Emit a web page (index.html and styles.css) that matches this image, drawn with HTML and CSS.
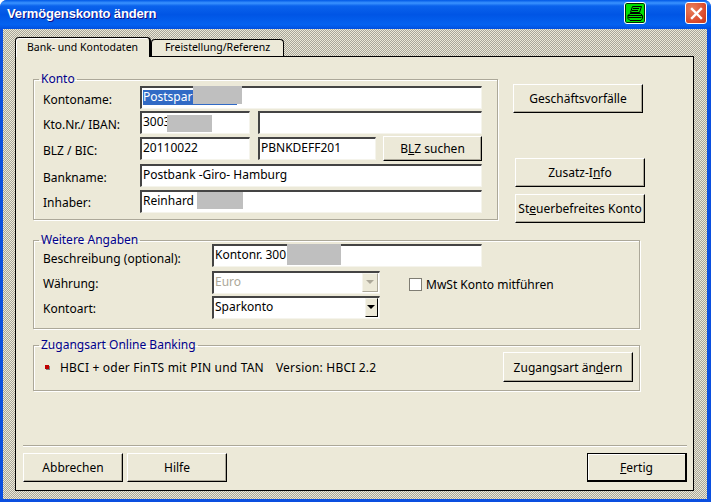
FILE: index.html
```html
<!DOCTYPE html>
<html lang="de">
<head>
    <meta charset="utf-8"/>
    <title>Vermögenskonto ändern</title>
    <link rel="stylesheet" href="styles.css">
</head>
<body>
<div class="window">
    <div class="titlebar">
        <span class="title">Vermögenskonto ändern</span>
        <span class="printer">
            <svg width="18" height="17" viewBox="0 0 18 17">
                <path d="M6.5 1.5h9l-2 6h-9z" fill="none" stroke="#000"/>
                <path d="M7 3.5h6M6 5.5h6" stroke="#000"/>
                <path d="M4 8.5h10.5l2 2v3l-1.5 2h-11l-2-2v-3z" fill="none" stroke="#000"/>
                <path d="M2 10.5h14M2.5 12.5h13" stroke="#000"/>
            </svg>
        </span>
        <span class="close">
            <svg width="13" height="13" viewBox="0 0 13 13">
                <path d="M2 2l9 9M11 2l-9 9" stroke="#fff" stroke-width="2.4" stroke-linecap="square"/>
            </svg>
        </span>
    </div>
    <div class="dither">
        <div class="tabs">
            <div class="tab active">Bank- und Kontodaten</div>
            <div class="tab">Freistellung/Referenz</div>
        </div>
        <div class="panel">
            <div class="top-row">
                <fieldset class="group konto">
                    <legend>Konto</legend>
                    <div class="konto-grid">
                        <label>Kontoname:</label>
                        <div class="field c-full"><span class="sel">Postspar</span><i class="redact r-name"></i></div>
                        <label>Kto.Nr./ IBAN:</label>
                        <div class="field c-kto">3003<i class="redact r-kto"></i></div>
                        <div class="field c-rest"></div>
                        <label>BLZ / BIC:</label>
                        <div class="field c-kto">20110022</div>
                        <div class="field c-bic">PBNKDEFF201</div>
                        <div class="btn btn-blz">B<u>L</u>Z suchen</div>
                        <label>Bankname:</label>
                        <div class="field c-full">Postbank -Giro- Hamburg</div>
                        <label class="last-label">Inhaber:</label>
                        <div class="field c-full">Reinhard<i class="redact r-inh"></i></div>
                    </div>
                </fieldset>
                <div class="side">
                    <div class="btn btn-side first">Geschäftsvorfälle</div>
                    <div class="btn btn-side second">Zusatz-I<u>n</u>fo</div>
                    <div class="btn btn-side third">St<u>e</u>uerbefreites Konto</div>
                </div>
            </div>
            <fieldset class="group weitere">
                <legend>Weitere Angaben</legend>
                <div class="weitere-grid">
                    <label>Beschreibung (optional):</label>
                    <div class="field wide">Kontonr. 300<i class="redact r-desc"></i></div>
                    <label>Währung:</label>
                    <div class="field combo disabled">Euro<span class="arrow wide-arrow"></span></div>
                    <div class="check-row"><span class="check"></span>MwSt Konto mitführen</div>
                    <label>Kontoart:</label>
                    <div class="field combo">Sparkonto<span class="arrow"></span></div>
                </div>
            </fieldset>
            <fieldset class="group zugang">
                <legend>Zugangsart Online Banking</legend>
                <div class="zugang-row">
                    <span class="bullet"></span>
                    <span class="zugang-text">HBCI + oder FinTS mit PIN und TAN</span>
                    <span class="zugang-version">Version: HBCI 2.2</span>
                    <div class="btn btn-zugang">Zugangsart än<u>d</u>ern</div>
                </div>
            </fieldset>
            <div class="footer">
                <div class="btn btn-foot">Abbrechen</div>
                <div class="btn btn-foot">Hilfe</div>
                <div class="btn btn-foot default"><u>F</u>ertig</div>
            </div>
        </div>
    </div>
</div>
</body>
</html>
```

FILE: styles.css
```css
html, body {
    margin: 0;
    padding: 0;
    background: #fff;
}
body {
    font-family: "Noto Sans", sans-serif;
    font-size: 12px;
    color: #000;
}
.window {
    width: 711px;
    height: 502px;
    display: flex;
    flex-direction: column;
    box-sizing: border-box;
    border-radius: 7px 7px 0 0;
    overflow: hidden;
    background: #0a4fe0;
}
.titlebar {
    height: 29px;
    flex: none;
    display: flex;
    align-items: center;
    padding: 0 4px 3px 7px;
    box-sizing: border-box;
    background: linear-gradient(#0058e6 0, #3a93ff 3px, #0a62ec 6px, #0055e5 50%, #0462f0 85%, #0050e0 100%);
}
.title {
    flex: 1;
    color: #fff;
    font-family: "Liberation Sans", sans-serif;
    font-weight: bold;
    font-size: 13px;
    letter-spacing: -.15px;
    text-shadow: 1px 1px 0 #0f1089;
}
.printer {
    width: 22px;
    height: 22px;
    box-sizing: border-box;
    border: 1px solid #fff;
    border-radius: 3px;
    background: #00e000;
    box-shadow: inset 0 0 0 1px #003000;
    display: flex;
    align-items: center;
    justify-content: center;
    margin-right: 39px;
}
.close {
    width: 22px;
    height: 22px;
    box-sizing: border-box;
    border: 1px solid #fff;
    border-radius: 3px;
    background: radial-gradient(circle at 30% 30%, #e8805c, #d9482a 70%, #c03a18);
    display: flex;
    align-items: center;
    justify-content: center;
}
.dither {
    flex: 1;
    display: flex;
    flex-direction: column;
    margin: 0 4px 3px 3px;
    padding: 8px 13px 8px 12px;
    background-color: #ece9d8;
    background-image: conic-gradient(#a8a69a 25%, #ece9d8 0 50%, #a8a69a 0 75%, #ece9d8 0);
    background-size: 2px 2px;
}
.tabs {
    display: flex;
    align-items: flex-end;
    height: 19px;
    flex: none;
}
.tab {
    height: 17px;
    width: 133px;
    box-sizing: border-box;
    text-align: center;
    line-height: 15px;
    background: #ece9d8;
    border: 1px solid #000;
    border-bottom: 0;
    border-radius: 4px 4px 0 0;
    font-size: 10.5px;
}
.tab.active {
    height: 20px;
    width: 136px;
    line-height: 18px;
    margin-bottom: -1px;
    position: relative;
    border-right-width: 2px;
    box-shadow: inset 1px 1px 0 #fff;
}
.panel {
    flex: 1;
    display: flex;
    flex-direction: column;
    background: #ece9d8;
    border: 1px solid #000;
    padding: 15px 6px 8px 17px;
}
.top-row {
    display: flex;
}
.group {
    margin: 0;
    padding: 0 6px 0 9px;
    min-width: 0;
    box-sizing: border-box;
    border: 1px solid #aca899;
    box-shadow: 1px 1px 0 #fff, inset 1px 1px 0 #fff;
    border-radius: 0;
}
.group legend {
    padding: 0 2px;
    margin-left: -4px;
    color: #00008b;
    font-size: 12px;
    line-height: 14px;
}
.konto {
    width: 465px;
    height: 148px;
}
.konto-grid {
    display: grid;
    grid-template-columns: 97px 110px 8px 118px 7px 99px;
    grid-template-rows: 25px 26px 27px 26px 22px;
}
label {
    line-height: 27px;
}
.last-label {
    line-height: 25px;
}
.weitere-grid label {
    line-height: 24px;
    align-self: end;
}
.field {
    position: relative;
    height: 23px;
    box-sizing: border-box;
    padding-left: 1px;
    line-height: 18px;
    background: #fff;
    border: 1px solid #fff;
    border-top: 2px solid #444;
    border-left: 2px solid #444;
    border-right-color: #f5f4ec;
    border-bottom-color: #f5f4ec;
    white-space: nowrap;
}
.c-full {
    grid-column: 2 / -1;
}
.c-kto {
    grid-column: 2;
}
.c-rest {
    grid-column: 4 / -1;
}
.c-bic {
    grid-column: 4;
}
.sel {
    display: inline-block;
    width: 94px;
    height: 15px;
    line-height: 14px;
    color: #fff;
    background: #316ac5;
}
.redact {
    position: absolute;
    background: #bfbfbf;
}
.r-name {
    left: 51px;
    top: -2px;
    width: 49px;
    height: 18px;
}
.r-kto {
    left: 25px;
    top: 2px;
    width: 45px;
    height: 17px;
}
.r-inh {
    left: 55px;
    top: 0;
    width: 46px;
    height: 17px;
}
.r-desc {
    left: 73px;
    top: -2px;
    width: 54px;
    height: 21px;
}
.btn {
    box-sizing: border-box;
    display: flex;
    align-items: center;
    justify-content: center;
    background: #ece9d8;
    border: 1px solid;
    border-color: #fff #000 #000 #fff;
    box-shadow: inset -1px -1px 0 #aca899;
    white-space: nowrap;
}
.btn-blz {
    grid-column: 6;
    height: 25px;
    margin-top: -1px;
}
.side {
    display: flex;
    flex-direction: column;
    align-items: flex-start;
    padding-top: 12px;
}
.btn-side {
    width: 130px;
    height: 29px;
}
.first {
    margin-left: 15px;
}
.second {
    margin: 45px 0 0 17px;
}
.third {
    margin: 7px 0 0 17px;
}
.weitere {
    width: 607px;
    height: 96px;
    margin-top: 10px;
}
.weitere-grid {
    display: grid;
    grid-template-columns: 169px 168px auto;
    grid-template-rows: 27px 25px 25px;
    margin-top: -3px;
}
.wide {
    grid-column: span 2;
    width: 270px;
}
.combo {
    height: 23px;
}
.disabled {
    color: #aca899;
}
.arrow {
    position: absolute;
    right: 1px;
    top: 0;
    width: 13px;
    height: 19px;
    box-sizing: border-box;
    background: #ece9d8;
    border: 1px solid;
    border-color: #f5f4ec #000 #000 #f5f4ec;
}
.arrow::after {
    content: "";
    position: absolute;
    left: 1px;
    top: 6px;
    border: 4px solid transparent;
    border-top: 4px solid #000;
    border-bottom: 0;
}
.wide-arrow {
    width: 16px;
    border-color: #f5f4ec #aca899 #aca899 #f5f4ec;
}
.wide-arrow::after {
    left: 3px;
    border-top-color: #aca899;
}
.check-row {
    grid-row: span 2;
    display: flex;
    align-items: flex-start;
    gap: 4px;
    margin-left: 29px;
    padding-top: 7px;
    line-height: 14px;
}
.check {
    width: 13px;
    height: 13px;
    box-sizing: border-box;
    border: 1px solid #7f7d73;
    background: #fff;
}
.zugang {
    width: 607px;
    height: 53px;
    margin-top: 9px;
    padding-right: 6px;
}
.zugang-row {
    display: flex;
    align-items: center;
    height: 30px;
}
.bullet {
    width: 4px;
    height: 4px;
    margin: 0 11px 0 2px;
    background: #c00000;
    box-shadow: 1px 1px 0 #808080;
}
.zugang-text, .zugang-version {
    letter-spacing: .2px;
}
.zugang-version {
    margin-left: 12px;
}
.btn-zugang {
    margin-left: auto;
    width: 130px;
    height: 30px;
}
.footer {
    margin-top: auto;
    margin-left: -10px;
    padding-top: 7px;
    border-top: 1px solid #aca899;
    box-shadow: inset 0 1px 0 #fff;
    display: flex;
    gap: 4px;
}
.btn-foot {
    width: 100px;
    height: 29px;
}
.default {
    margin-left: auto;
    border: 1px solid #000;
    border-right-width: 2px;
    border-bottom-width: 2px;
    box-shadow: inset 1px 1px 0 #fff;
}
```
